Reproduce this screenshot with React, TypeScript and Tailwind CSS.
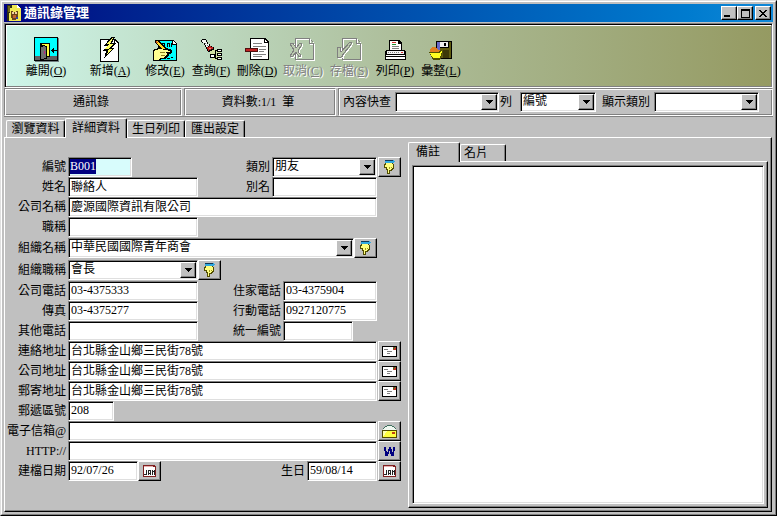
import type { ReactNode } from "react";
import clsx from "clsx";

const sunken =
  "border border-t-[#808080] border-l-[#808080] border-r-white border-b-white shadow-[inset_1px_1px_0_#000,inset_-1px_-1px_0_#dfdfdf]";
const raised =
  "border border-t-white border-l-white border-r-black border-b-black shadow-[inset_-1px_-1px_0_#808080] bg-[#c0c0c0]";

type SvgProps = {
  w: number;
  h: number;
  className?: string;
  children: ReactNode;
};

const Pix = ({ w, h, className, children }: SvgProps) => (
  <svg
    width={w}
    height={h}
    viewBox={`0 0 ${w} ${h}`}
    shapeRendering="crispEdges"
    className={clsx("block shrink-0", className)}
    aria-hidden="true"
  >
    {children}
  </svg>
);

const ExitIcon = () => (
  <Pix w={25} h={25}>
    <path d="M1 1h24v24H1z" fill="#708080" />
    <path d="M0 0h24v24H0z" fill="#000" />
    <path d="M1 1h22v18H1z" fill="#00ffff" />
    <path d="M1 19h22v4H1z" fill="#606060" />
    <path d="M6 6h10v14H6z" fill="#000" />
    <path d="M8 7h7v12H8z" fill="#ffff40" />
    <path d="M6 9h2V8h3v1h2v13h-3v1H6z" fill="#000" />
    <path d="M7 10h2V9h2v1h1v11h-2v1H7z" fill="#707070" />
    <path d="M10 14h1v3h-1z" fill="#c02080" />
    <path d="M17 13h6v1h-6zM18 12h1v3h-1zM19 11h1v5h-1z" fill="#000" />
  </Pix>
);

const AddIcon = () => (
  <Pix w={20} h={25}>
    <path d="M0 2h15l4 4v19H0z" fill="#000" />
    <path d="M1 3h13v4h4v17H1z" fill="#fff" />
    <path d="M15 4l3 3h-3z" fill="#fff" />
    <path d="M11 0h4l-3 6h4l-5 5h3l-10 11 2-8H3l4-5H4z" fill="#000" />
    <path d="M12 1h1l-3 6h3l-4 5h3l-5 6 2-6H5l4-5H6z" fill="#ffff60" />
  </Pix>
);

const EditIcon = () => (
  <Pix w={25} h={24}>
    <path d="M5 2h15l4 4v17H5z" fill="#000" />
    <path d="M6 3h13v4h4v15H6z" fill="#00ffff" />
    <path d="M20 3l3 3h-3z" fill="#fff" />
    <path
      d="M9 5h3v1H9zM9 6h1v3H9zM11 6h1v3h-1zM14 5h3v1h-3zM14 6h1v3h-1zM16 6h1v3h-1zM18 5h1v4h-1zM14 20h3v1h-3zM18 19h2v1h-2z"
      fill="#000"
    />
    <path d="M2 2h3l8 8 4 1 2 2v2l-3 1v2l-4 3H8l-2 2H0V12l5-2 2-1-5-4z" fill="#000" />
    <path d="M1 13l5-2 7 1 4 1v1h-4l1 2-1 2-3 2H7l-2 2H1z" fill="#ffff90" />
    <path d="M3 3h1l8 8h-3L3 5z" fill="#ffd820" />
    <path d="M3 3h1v1h1v1H3z" fill="#d05020" />
    <path d="M7 14h5v1H7zM8 17h4v1H8z" fill="#908020" />
  </Pix>
);

const FindIcon = () => (
  <Pix w={21} h={22}>
    <path d="M8 10l12 1v9l-9 1z" fill="#e0e890" opacity="0.6" />
    <path d="M0 1h1V0h4v1h1v2h1v2h2v2h2v1h2v3h-2v1H9v1H7v-1H6v-2H5V8H4V6H3V4H1V3H0z" fill="#000" />
    <path d="M1 1h4v2h1v2h2v2H7v1H5V6H4V4H2V3H1z" fill="#f4f4f4" />
    <path d="M4 4h1v1H4zM6 6h1v1H6z" fill="#808080" />
    <path d="M6 8h2V7h2v1h2v2h-2v1H8v1H7v-2H6z" fill="#c02020" />
    <path d="M8 9h2v1H8z" fill="#f08080" />
    <path
      d="M9 15h5v4H9zM16 10h5v3h-5zM16 14h5v3h-5zM16 18h5v3h-5zM14 11h2v1h-2zM14 11h1v9h-1zM14 19h2v1h-2z"
      fill="#000"
    />
    <path
      d="M10 16h3v2h-3zM17 11h3v1h-3zM17 15h3v1h-3zM17 19h3v1h-3z"
      fill="#fff"
    />
  </Pix>
);

const DeleteIcon = () => (
  <Pix w={25} h={23}>
    <path d="M5 0h15l4 4v18H5z" fill="#000" />
    <path d="M6 1h13v4h4v16H6z" fill="#fff" />
    <path d="M20 2l3 2h-3z" fill="#fff" />
    <path
      d="M8 5h9v1H8zM8 8h13v1H8zM14 11h7v1h-7zM14 13h5v1h-5zM8 16h13v1H8zM8 18h9v1H8z"
      fill="#808080"
    />
    <path d="M0 10h13v4H0z" fill="#501010" />
    <path d="M1 11h11v2H1z" fill="#c02020" />
  </Pix>
);

const disabledPage = "M5 0h15v1H6v20h17V5h1v17H5zM19 1h1v4h4v1h-5zM21 2h1v1h-1zM22 3h1v1h-1z";

const CancelIcon = () => (
  <Pix w={26} h={24}>
    <path
      d="M0 6l3-1 3 5 4-5 2 1-4 7 3 5-2 1-3-5-4 5-2-1 4-6z"
      fill="none"
      stroke="#fff"
      transform="translate(1 1)"
    />
    <path d={disabledPage} fill="#fff" transform="translate(1 1)" />
    <path d={disabledPage} fill="#808080" />
    <path
      d="M0 6l3-1 3 5 4-5 2 1-4 7 3 5-2 1-3-5-4 5-2-1 4-6z"
      fill="#bccbb0"
      stroke="#808080"
    />
  </Pix>
);

const SaveIcon = () => (
  <Pix w={27} h={24}>
    <path d={disabledPage} fill="#fff" transform="translate(2 1)" />
    <path d={disabledPage} fill="#808080" transform="translate(1 0)" />
    <path
      d="M2 11l3-1 1 5 9-10 2 1L6 20l-3 1z"
      fill="none"
      stroke="#fff"
    />
    <path
      d="M1 10l3-1 1 5 9-10 2 1L5 19l-3 1z"
      fill="#b8c8aa"
      stroke="#808080"
    />
  </Pix>
);

const PrintIcon = () => (
  <Pix w={21} h={20}>
    <path d="M4 0h10l3 3v8H4z" fill="#000" />
    <path d="M5 1h8v3h3v7H5z" fill="#fff" />
    <path d="M7 2h4v1H7z" fill="#d03030" />
    <path d="M7 4h4v1H7z" fill="#209030" />
    <path d="M7 6h7v1H7zM7 8h7v1H7z" fill="#808080" />
    <path d="M1 10h19v1h1v9H0v-9h1z" fill="#000" />
    <path d="M2 11h17v3H2z" fill="#f4f4f4" />
    <path d="M1 15h19v1H1zM1 17h19v2H1z" fill="#fff" />
    <path
      d="M3 12h1v1H3zM5 12h1v1H5zM7 12h1v1H7zM9 12h1v1H9zM11 12h1v1h-1zM13 12h1v1h-1z"
      fill="#808080"
    />
    <path d="M16 12h2v1h-2z" fill="#d03030" />
  </Pix>
);

const PackIcon = () => (
  <Pix w={24} h={20}>
    <path d="M7 1h16v18H9l-2-2z" fill="#000" />
    <path d="M8 2h3v9H8z" fill="#6868c8" />
    <path d="M20 2h2v16h-2zM11 8h9v10h-9z" fill="#605c10" />
    <path d="M11 2h8v5h-8z" fill="#f0f0f0" />
    <path d="M15 3h2v3h-2z" fill="#000" />
    <path d="M14 10h6v8h-6z" fill="#3c3808" />
    <path d="M1 9l2-2h4l2 3h4v3H1z" fill="#e08020" />
    <path d="M0 12h9l3-2 2 1-2 7-2 2H4z" fill="#505000" />
    <path d="M1 13h9l2-2 1 1-2 5-1 1H4z" fill="#ffff20" />
  </Pix>
);

const HandIcon = () => (
  <Pix w={11} h={14}>
    <path d="M1 0h9v1h1v1h-1v1H1z" fill="#30a8e0" />
    <path d="M1 0h8v1H1z" fill="#103858" />
    <path d="M1 3h8v1h1v5H9v1H8v1H6v3H3v-4H2V8H0V4h1z" fill="#504c00" />
    <path d="M2 3h6v1h1v4H8v1H7v1H5v3H4V9H3V7H1V5h1z" fill="#ffff80" />
    <path d="M5 7h1v2H5zM7 7h1v1H7z" fill="#a09820" />
  </Pix>
);

const LetterIcon = () => (
  <Pix w={15} h={11}>
    <path d="M0 0h15v11H0z" fill="#000" />
    <path d="M1 1h13v9H1z" fill="#fff" />
    <path d="M2 3h4v1H2zM5 5h5v1H5zM5 7h3v1H5z" fill="#808080" />
    <path d="M11 1h3v3h-3z" fill="#c03020" />
    <path d="M12 1h1v1h-1zM11 2h1v1h-1z" fill="#109030" />
  </Pix>
);

const MailIcon = () => (
  <Pix w={15} h={13}>
    <path d="M4 1h7v1h1v1h1v1h1v1H1V4h1V3h1V2h1z" fill="#f0f8f0" />
    <path d="M5 0h5v1H5zM3 1h2v1H3zM10 1h2v1h-2zM2 2h1v1H2zM12 2h1v1h-1zM1 3h1v1H1zM13 3h1v1h-1z" fill="#407060" />
    <path d="M0 5h15v8H0z" fill="#504800" />
    <path d="M1 6h13v6H1z" fill="#ffff40" />
    <path d="M1 6h4L2 11H1z" fill="#ffffb0" />
    <path d="M10 7h3v2h-3z" fill="#c04010" />
  </Pix>
);

const WebIcon = () => (
  <Pix w={11} h={9}>
    <path
      d="M0 0h2v4h1v1h1V2h1V0h2v2h1v3h1V4h0V0h2v4h-1v5H7V7H6V4H5v3H4v2H1V4H0z"
      fill="#000080"
    />
  </Pix>
);

const CalendarIcon = () => (
  <Pix w={13} h={12}>
    <path d="M0 0h11l2 2v10H0z" fill="#802020" />
    <path d="M1 2h11v9H1z" fill="#fff" />
    <path d="M1 1h9v1H1z" fill="#e8b0b0" />
    <path
      d="M3 5h1v5H3zM1 9h2v1H1zM5 6h1v4H5zM7 6h1v4H7zM5 5h3v1H5zM6 8h1v1H6zM9 5h1v5H9zM10 6h1v1h-1zM11 5h1v5h-1z"
      fill="#202020"
    />
  </Pix>
);

const AppIcon = () => (
  <Pix w={14} h={16}>
    <path d="M0 0h10l4 3v13H0z" fill="#f0e850" />
    <path d="M0 0h5v3H3v5H2v8H0z" fill="#303010" />
    <path d="M1 1h2v6H1z" fill="#706818" />
    <path d="M10 0l4 3h-4z" fill="#fff" />
    <path d="M4 6h2v1h3V6h2v8H9v1H5v-2H4z" fill="#6b4418" />
    <path d="M5 7h2v2H5zM8 7h2v2H8z" fill="#f0d0a0" />
    <path d="M6 10h3v3H6z" fill="#c06030" />
    <path d="M9 12h2v2H9z" fill="#3040a0" />
  </Pix>
);

type ToolProps = {
  text: string;
  hotkey: string;
  icon: ReactNode;
  wide?: boolean;
  disabled?: boolean;
};

const tools: ToolProps[] = [
  { text: "離開", hotkey: "O", icon: <ExitIcon />, wide: true },
  { text: "新增", hotkey: "A", icon: <AddIcon />, wide: true },
  { text: "修改", hotkey: "E", icon: <EditIcon /> },
  { text: "查詢", hotkey: "F", icon: <FindIcon /> },
  { text: "刪除", hotkey: "D", icon: <DeleteIcon /> },
  { text: "取消", hotkey: "C", icon: <CancelIcon />, disabled: true },
  { text: "存檔", hotkey: "S", icon: <SaveIcon />, disabled: true },
  { text: "列印", hotkey: "P", icon: <PrintIcon /> },
  { text: "彙整", hotkey: "L", icon: <PackIcon /> },
];

const Tool = ({ text, hotkey, icon, wide, disabled }: ToolProps) => (
  <button
    type="button"
    disabled={disabled}
    className={clsx(
      "flex flex-col items-center whitespace-nowrap",
      wide ? "w-16" : "w-[46px]",
      disabled && "text-[#808080] [text-shadow:1px_1px_0_#fff]"
    )}
  >
    <span className="flex h-[27px] items-center">{icon}</span>
    <span className="leading-4">
      {text}(<u>{hotkey}</u>)
    </span>
  </button>
);

const Arrow = () => (
  <span
    className={clsx(
      raised,
      "pointer-events-none absolute top-0.5 right-0.5 bottom-0.5 flex w-4 items-center justify-center"
    )}
  >
    <Pix w={7} h={4}>
      <path d="M0 0h7v1H0zM1 1h5v1H1zM2 2h3v1H2zM3 3h1v1H3z" fill="#000" />
    </Pix>
  </span>
);

type FieldProps = { id: string; value?: string; className?: string };

const Combo = ({ id, value = "", className }: FieldProps) => (
  <span className={clsx("relative block h-5", className)}>
    <select
      id={id}
      defaultValue={value}
      className={clsx(
        sunken,
        "block h-full w-full appearance-none bg-white pr-4 pb-0.5 pl-0.5 leading-4 outline-none"
      )}
    >
      <option value={value}>{value}</option>
    </select>
    <Arrow />
  </span>
);

const Field = ({ id, value = "", className }: FieldProps) => (
  <input
    id={id}
    type="text"
    defaultValue={value}
    className={clsx(
      sunken,
      "block h-5 bg-white pr-0.5 pb-0.5 pl-0.5 leading-4 outline-none",
      className
    )}
  />
);

type RowProps = {
  id: string;
  label: string;
  children: ReactNode;
  side?: ReactNode;
  tall?: boolean;
};

const Row = ({ id, label, children, side, tall }: RowProps) => (
  <div className={clsx("flex items-center", tall ? "h-[22px]" : "h-5")}>
    <label htmlFor={id} className="w-[61px] shrink-0 pr-0.5 text-right whitespace-nowrap">
      {label}
    </label>
    <div className="flex flex-1 items-center">{children}</div>
    <div className="w-6 shrink-0 pl-px">{side}</div>
  </div>
);

const Second = ({ id, label }: { id: string; label: string }) => (
  <label htmlFor={id} className="flex-1 pr-0.5 text-right">
    {label}
  </label>
);

const SmallButton = ({ name, children }: { name: string; children: ReactNode }) => (
  <button
    type="button"
    aria-label={name}
    className={clsx(raised, "flex h-5 w-[23px] shrink-0 items-center justify-center")}
  >
    {children}
  </button>
);

const Tab = ({ text, active, className }: { text: string; active?: boolean; className?: string }) => (
  <button
    type="button"
    role="tab"
    aria-selected={!!active}
    className={clsx(
      "rounded-t-xs border border-b-0 border-t-white border-l-white border-r-black bg-[#c0c0c0] text-center shadow-[inset_-1px_0_0_#808080]",
      active ? "relative -mb-px h-5 pb-0.5" : "h-[17px]",
      className
    )}
  >
    {text}
  </button>
);

const panel =
  "border border-t-white border-l-white border-r-black border-b-black shadow-[inset_-1px_-1px_0_#808080]";
const statusCell =
  "flex items-center border border-t-[#808080] border-l-[#808080] border-r-white border-b-white shadow-[inset_1px_1px_0_#fff,inset_-1px_-1px_0_#808080]";

const TitleBar = () => (
  <header className="flex h-[18px] items-center bg-linear-to-r from-[#000080] to-[#1088d8] pr-0.5 pl-[3px] text-white">
    <AppIcon />
    <h1 className="flex-1 pl-[3px] text-[13px] leading-4 font-bold">通訊錄管理</h1>
    <button type="button" aria-label="最小化" className={clsx(raised, "flex h-3.5 w-4 items-end justify-center pb-0.5")}>
      <Pix w={6} h={2} className="mr-1">
        <path d="M0 0h6v2H0z" />
      </Pix>
    </button>
    <button type="button" aria-label="最大化" className={clsx(raised, "flex h-3.5 w-4 items-center justify-center")}>
      <Pix w={9} h={9}>
        <path d="M0 0h9v9H0zM1 2v6h7V2z" fillRule="evenodd" />
      </Pix>
    </button>
    <button type="button" aria-label="關閉" className={clsx(raised, "ml-0.5 flex h-3.5 w-4 items-center justify-center")}>
      <Pix w={8} h={7}>
        <path d="M0 0h2v1h1v1h2V1h1V0h2v1H7v1H6v1H5v1h1v1h1v1h1v1H6V6H5V5H3v1H2v1H0V6h1V5h1V4h1V3H2V2H1V1H0z" />
      </Pix>
    </button>
  </header>
);

const StatusBar = () => (
  <div className="flex h-[29px] gap-0.5 border-b border-[#808080]">
    <div className={clsx(statusCell, "w-[178px] justify-center pr-1")}>通訊錄</div>
    <div className={clsx(statusCell, "w-[152px] justify-center pr-1 whitespace-pre")}>
      {"資料數:1/1  筆"}
    </div>
    <div className={clsx(statusCell, "flex-1 pl-1")}>
      <label htmlFor="quick" className="w-[52px]">
        內容快查
      </label>
      <Combo id="quick" className="w-[104px]" />
      <label htmlFor="column" className="w-[21px] pl-px">
        列
      </label>
      <Combo id="column" value="編號" className="w-[76px]" />
      <label htmlFor="kind" className="w-[58px] pl-1.5">
        顯示類別
      </label>
      <Combo id="kind" className="w-[105px]" />
    </div>
  </div>
);

const Form = () => (
  <form className="w-[396px] shrink-0 pt-[19px] pl-0.5">
    <Row
      id="no"
      label="編號"
      side={
        <SmallButton name="選擇類別">
          <HandIcon />
        </SmallButton>
      }
    >
      <input
        id="no"
        type="text"
        defaultValue="B001"
        autoFocus
        onFocus={(e) => e.target.select()}
        className={clsx(
          sunken,
          "block h-5 w-16 bg-[#d8fcfc] pb-0.5 pl-px leading-4 outline-none selection:bg-[#000080] selection:text-white"
        )}
      />
      <Second id="type" label="類別" />
      <Combo id="type" value="朋友" className="w-[105px]" />
    </Row>
    <Row id="name" label="姓名">
      <Field id="name" value="聯絡人" className="w-[130px]" />
      <Second id="alias" label="別名" />
      <Field id="alias" className="w-[105px]" />
    </Row>
    <Row id="company" label="公司名稱">
      <Field id="company" value="慶源國際資訊有限公司" className="w-full" />
    </Row>
    <Row id="job" label="職稱">
      <Field id="job" className="w-[130px]" />
    </Row>
    <Row id="org" label="組織名稱" tall>
      <Combo id="org" value="中華民國國際青年商會" className="flex-1" />
      <SmallButton name="選擇組織">
        <HandIcon />
      </SmallButton>
    </Row>
    <Row id="rank" label="組織職稱" tall>
      <Combo id="rank" value="會長" className="w-[130px]" />
      <SmallButton name="選擇職稱">
        <HandIcon />
      </SmallButton>
    </Row>
    <Row id="tel" label="公司電話">
      <Field id="tel" value="03-4375333" className="w-[130px]" />
      <Second id="home" label="住家電話" />
      <Field id="home" value="03-4375904" className="w-[94px]" />
    </Row>
    <Row id="fax" label="傳真">
      <Field id="fax" value="03-4375277" className="w-[130px]" />
      <Second id="mobile" label="行動電話" />
      <Field id="mobile" value="0927120775" className="w-[94px]" />
    </Row>
    <Row id="other" label="其他電話">
      <Field id="other" className="w-[130px]" />
      <Second id="tax" label="統一編號" />
      <Field id="tax" className="mr-6 w-[70px]" />
    </Row>
    {["連絡地址", "公司地址", "郵寄地址"].map((label, i) => (
      <Row
        key={label}
        id={`addr${i}`}
        label={label}
        side={
          <SmallButton name={`列印${label}`}>
            <LetterIcon />
          </SmallButton>
        }
      >
        <Field id={`addr${i}`} value="台北縣金山鄉三民街78號" className="w-full" />
      </Row>
    ))}
    <Row id="zip" label="郵遞區號">
      <Field id="zip" value="208" className="w-[46px]" />
    </Row>
    <Row
      id="email"
      label="電子信箱@"
      side={
        <SmallButton name="寄信">
          <MailIcon />
        </SmallButton>
      }
    >
      <Field id="email" className="w-full" />
    </Row>
    <Row
      id="http"
      label="HTTP://"
      side={
        <SmallButton name="開啟網頁">
          <WebIcon />
        </SmallButton>
      }
    >
      <Field id="http" className="w-full" />
    </Row>
    <Row
      id="created"
      label="建檔日期"
      side={
        <SmallButton name="選擇生日">
          <CalendarIcon />
        </SmallButton>
      }
    >
      <Field id="created" value="92/07/26" className="w-[70px]" />
      <SmallButton name="選擇日期">
        <CalendarIcon />
      </SmallButton>
      <Second id="birthday" label="生日" />
      <Field id="birthday" value="59/08/14" className="w-[70px]" />
    </Row>
  </form>
);

const Notes = () => (
  <section className="flex flex-1 flex-col pt-1 pr-[3px] pb-[3px] pl-[7px]">
    <div role="tablist" className="flex items-end">
      <Tab text="備註" active className="w-[52px] pr-3" />
      <Tab text="名片" className="w-[46px] pr-3.5" />
    </div>
    <div className={clsx(panel, "flex flex-1 p-[3px]")}>
      <textarea
        aria-label="備註"
        className={clsx(sunken, "block w-full flex-1 resize-none bg-white p-1 outline-none")}
      />
    </div>
  </section>
);

const App = () => {
  return (
    <div className="border border-t-[#dfdfdf] border-l-[#dfdfdf] border-r-black border-b-black bg-[#c0c0c0] font-['Liberation_Serif','Noto_Sans_CJK_TC',serif] text-xs leading-4 text-black">
      <div className="flex min-h-[calc(100vh-2px)] flex-col border border-t-white border-l-white border-r-[#808080] border-b-[#808080] p-0.5">
        <TitleBar />
        <nav className="mt-px flex h-[65px] items-start border border-t-[#808080] border-l-[#808080] border-r-white border-b-white bg-linear-to-r from-[#cef6ea] via-[#aebf9c] to-[#959a62] pt-3 pl-[9px] shadow-[inset_1px_1px_0_#000,inset_-1px_-1px_0_#808080,inset_2px_2px_0_#fff]">
          {tools.map((tool) => (
            <Tool key={tool.text} {...tool} />
          ))}
        </nav>
        <StatusBar />
        <div role="tablist" className="mt-px flex items-end pl-0.5">
          <Tab text="瀏覽資料" className="w-[59px]" />
          <Tab text="詳細資料" active className="w-[62px]" />
          <Tab text="生日列印" className="w-[58px]" />
          <Tab text="匯出設定" className="w-[60px]" />
        </div>
        <main className={clsx(panel, "mr-px flex flex-1")}>
          <Form />
          <Notes />
        </main>
      </div>
    </div>
  );
};

export default App;
